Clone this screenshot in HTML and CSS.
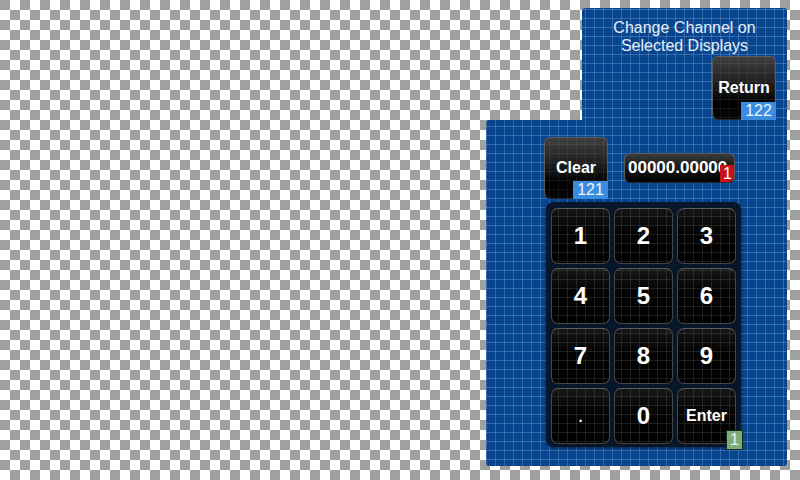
FILE: index.html
```html
<!DOCTYPE html>
<html>
<head>
<meta charset="utf-8">
<title>Change Channel</title>
<link rel="stylesheet" href="styles.css">
</head>
<body>
<div class="stage">
  <div class="panel">
    <section class="panel-top">
      <h1 class="title">Change Channel on<br>Selected Displays</h1>
      <div class="top-actions">
        <button class="btn btn-return">Return<span class="badge badge-blue">122</span></button>
      </div>
    </section>
    <section class="panel-main">
      <div class="entry-row">
        <button class="btn btn-clear">Clear<span class="badge badge-blue">121</span></button>
        <div class="display"><span class="display-text">00000.00000</span><span class="badge badge-red">1</span></div>
      </div>
      <div class="keypad">
        <button class="key">1</button>
        <button class="key">2</button>
        <button class="key">3</button>
        <button class="key">4</button>
        <button class="key">5</button>
        <button class="key">6</button>
        <button class="key">7</button>
        <button class="key">8</button>
        <button class="key">9</button>
        <button class="key key-dot">.</button>
        <button class="key">0</button>
        <button class="key key-enter">Enter<span class="badge badge-green">1</span></button>
      </div>
    </section>
  </div>
</div>
</body>
</html>
```

FILE: styles.css
```css
html, body {
  margin: 0;
  padding: 0;
}

body {
  width: 800px;
  height: 480px;
  overflow: hidden;
  font-family: "Liberation Sans", Arial, sans-serif;
  background-color: #fff;
  background-image: conic-gradient(#fff 25%, #a0a0a0 0 50%, #fff 0 75%, #a0a0a0 0);
  background-size: 20px 20px;
}

.stage {
  box-sizing: border-box;
  width: 800px;
  height: 480px;
  display: flex;
  justify-content: flex-end;
  padding: 8px 13px 0 0;
}

.panel {
  display: flex;
  flex-direction: column;
  align-items: flex-end;
}

.panel-top,
.panel-main {
  background-color: #07458f;
  background-image:
    linear-gradient(90deg, rgba(150, 185, 230, 0.3) 1px, transparent 1px),
    linear-gradient(180deg, rgba(150, 185, 230, 0.3) 1px, transparent 1px);
  background-size: 9px 9px;
  background-attachment: fixed;
}

.panel-top {
  box-sizing: border-box;
  width: 205px;
  height: 112px;
  border-radius: 3px 3px 0 0;
  padding-top: 11px;
  display: flex;
  flex-direction: column;
  align-items: center;
}

.title {
  margin: 0;
  height: 37px;
  font-size: 16px;
  line-height: 18px;
  font-weight: normal;
  color: #e8eef8;
  text-align: center;
}

.top-actions {
  align-self: stretch;
  display: flex;
  justify-content: flex-end;
  padding-right: 11px;
}

.panel-main {
  box-sizing: border-box;
  width: 301px;
  height: 346px;
  border-radius: 3px 0 3px 3px;
  padding: 17px 0 0 58px;
}

.entry-row {
  display: flex;
  align-items: center;
  gap: 16px;
}

.btn {
  position: relative;
  box-sizing: border-box;
  padding: 0;
  font-family: inherit;
  font-size: 16px;
  font-weight: bold;
  color: #fff;
  border: 1px solid #5c5c5c;
  border-bottom-color: #2a2a2a;
  border-radius: 6px;
  background-color: #000;
  background-image:
    linear-gradient(90deg, rgba(255, 255, 255, 0.06) 1px, transparent 1px),
    linear-gradient(180deg, rgba(255, 255, 255, 0.06) 1px, transparent 1px),
    linear-gradient(180deg, #404040 0%, #1c1c1c 45%, #000 75%, #050505 100%);
  background-size: 9px 9px, 9px 9px, 100% 100%;
  background-attachment: fixed, fixed, scroll;
}

.btn-return {
  width: 64px;
  height: 64px;
}

.btn-clear {
  width: 64px;
  height: 62px;
}

.badge {
  position: absolute;
  box-sizing: border-box;
  font-size: 16px;
  font-weight: normal;
  line-height: 18px;
  text-align: center;
  color: #eef5ff;
}

.badge-blue {
  right: -1px;
  bottom: -1px;
  width: 35px;
  height: 18px;
  background: #3a8ce0;
}

.badge-red {
  right: -1px;
  bottom: -1px;
  width: 15px;
  height: 18px;
  background: #c8111b;
  color: #fff;
}

.badge-green {
  right: -8px;
  bottom: -7px;
  width: 17px;
  height: 20px;
  line-height: 18px;
  background: #7eab7c;
  border: 1px solid #16281a;
  color: #eaf4ea;
}

.display {
  position: relative;
  box-sizing: border-box;
  width: 111px;
  height: 30px;
  border: 1px solid #5c5c5c;
  border-bottom-color: #2a2a2a;
  border-radius: 6px;
  background: linear-gradient(180deg, #3a3a3a 0%, #181818 50%, #000 100%);
  overflow: hidden;
  display: flex;
  align-items: center;
  padding-left: 3px;
}

.display-text {
  font-size: 17px;
  line-height: 20px;
  font-weight: bold;
  color: #fff;
  white-space: nowrap;
}

.keypad {
  box-sizing: border-box;
  width: 195px;
  height: 245px;
  margin: 3px 0 0 2px;
  padding: 6px 5px 3px;
  display: grid;
  grid-template-columns: repeat(3, 59px);
  grid-template-rows: repeat(4, 56px);
  gap: 4px;
  background: #08162a;
  border-radius: 8px;
  box-shadow: 0 1px 3px rgba(0, 0, 0, 0.5);
}

.key {
  position: relative;
  box-sizing: border-box;
  padding: 0;
  font-family: inherit;
  font-size: 24px;
  font-weight: bold;
  color: #fff;
  border: 1px solid #464646;
  border-top-color: #5e5e5e;
  border-radius: 7px;
  background-color: #020202;
  background-image:
    linear-gradient(90deg, rgba(255, 255, 255, 0.1) 1px, transparent 1px),
    linear-gradient(180deg, rgba(255, 255, 255, 0.1) 1px, transparent 1px),
    linear-gradient(180deg, #161616 0%, #040404 40%, #000 100%);
  background-size: 9px 9px, 9px 9px, 100% 100%;
  background-attachment: fixed, fixed, scroll;
}

.key-dot {
  font-size: 15px;
}

.key-enter {
  font-size: 16px;
}
```
